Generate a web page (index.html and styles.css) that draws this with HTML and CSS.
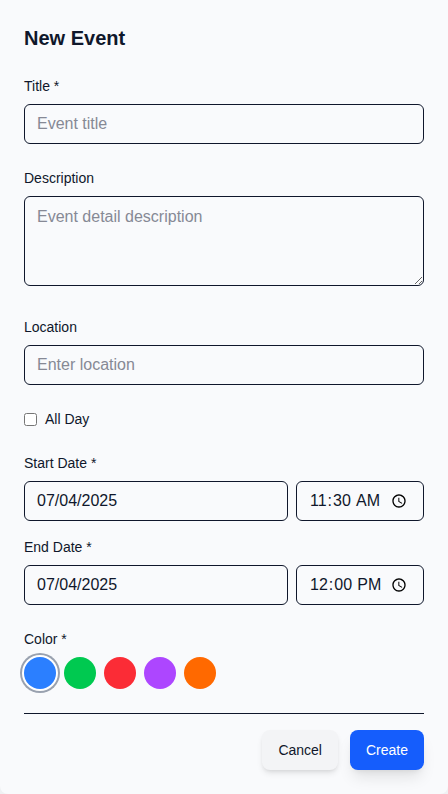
FILE: index.html
```html
<!DOCTYPE html>
<html lang="en">
<head>
<meta charset="utf-8">
<title>New Event</title>
<link rel="stylesheet" href="styles.css">
</head>
<body>
<form class="dialog">
  <h2 class="title">New Event</h2>
  <div class="field">
    <label class="label" for="title">Title *</label>
    <input class="input" id="title" type="text" placeholder="Event title">
  </div>
  <div class="field description">
    <label class="label" for="desc">Description</label>
    <textarea class="input area" id="desc" placeholder="Event detail description"></textarea>
  </div>
  <div class="field">
    <label class="label" for="loc">Location</label>
    <input class="input" id="loc" type="text" placeholder="Enter location">
  </div>
  <label class="check"><input class="checkbox" type="checkbox"><span>All Day</span></label>
  <div class="field start">
    <label class="label" for="sd">Start Date *</label>
    <div class="row">
      <input class="input" id="sd" type="text" value="07/04/2025">
      <input class="input time" type="time" value="11:30" aria-label="Start time">
    </div>
  </div>
  <div class="field">
    <label class="label" for="ed">End Date *</label>
    <div class="row">
      <input class="input" id="ed" type="text" value="07/04/2025">
      <input class="input time" type="time" value="12:00" aria-label="End time">
    </div>
  </div>
  <div class="field colors">
    <span class="label">Color *</span>
    <div class="swatches">
      <button type="button" class="swatch blue selected" aria-label="Blue"></button>
      <button type="button" class="swatch green" aria-label="Green"></button>
      <button type="button" class="swatch red" aria-label="Red"></button>
      <button type="button" class="swatch purple" aria-label="Purple"></button>
      <button type="button" class="swatch orange" aria-label="Orange"></button>
    </div>
  </div>
  <div class="actions">
    <button type="button" class="btn cancel">Cancel</button>
    <button type="button" class="btn create">Create</button>
  </div>
</form>
</body>
</html>
```
FILE: styles.css
```css
* { box-sizing: border-box; }
body {
  margin: 0;
  background: #eff1f3;
  color: #0f172b;
  font: 14px/20px "Liberation Sans", Arial, sans-serif;
}
.dialog {
  height: 794px;
  padding: 24px;
  border-radius: 0 0 8px 8px;
  background: #f9fafc;
}
.title { margin: 0 0 24px; font-size: 20px; line-height: 28px; font-weight: 700; }
.field { margin-bottom: 24px; }
.label { display: block; margin-bottom: 8px; }
.input {
  display: block;
  width: 100%;
  height: 40px;
  margin: 0;
  padding: 8px 12px;
  border: 1px solid #0f172b;
  border-radius: 6px;
  background: transparent;
  color: inherit;
  font: 16px/24px "Liberation Sans", Arial, sans-serif;
}
.input::placeholder { color: #868995; opacity: 1; }
.area { height: 90px; resize: vertical; }
.description { margin-bottom: 31px; }
.check { display: flex; align-items: center; gap: 8px; margin-bottom: 24px; }
.checkbox { width: 13px; height: 13px; margin: 0; }
.row { display: flex; gap: 8px; }
.row .input { flex: 1; min-width: 0; }
.row .time { flex: 0 0 128px; }
.time::-webkit-datetime-edit { display: inline-flex; padding-block: 0; overflow: visible; }
.time::-webkit-datetime-edit-fields-wrapper { padding: 0; }
.start { margin-bottom: 16px; }
.colors { margin-bottom: 24px; }
.swatches { display: flex; gap: 8px; }
.swatch { width: 32px; height: 32px; padding: 0; border: 0; border-radius: 50%; }
.selected { box-shadow: 0 0 0 2px #fff, 0 0 0 4px #99a1af; }
.blue { background: #2b7fff; }
.green { background: #00c950; }
.red { background: #fb2c36; }
.purple { background: #ad46ff; }
.orange { background: #ff6900; }
.actions {
  display: flex;
  justify-content: flex-end;
  gap: 12px;
  padding-top: 16px;
  border-top: 1px solid #0f172b;
}
.btn {
  height: 40px;
  padding: 0 16px;
  border: 0;
  border-radius: 8px;
  font: 14px/20px "Liberation Sans", Arial, sans-serif;
}
.cancel { background: #f3f4f6; color: #0f172b; box-shadow: 0 4px 6px -1px rgba(0,0,0,.1), 0 2px 4px -2px rgba(0,0,0,.1); }
.create { background: #155dfc; color: #fff; box-shadow: 0 10px 15px -3px rgba(0,0,0,.1), 0 4px 6px -4px rgba(0,0,0,.1); }
```
